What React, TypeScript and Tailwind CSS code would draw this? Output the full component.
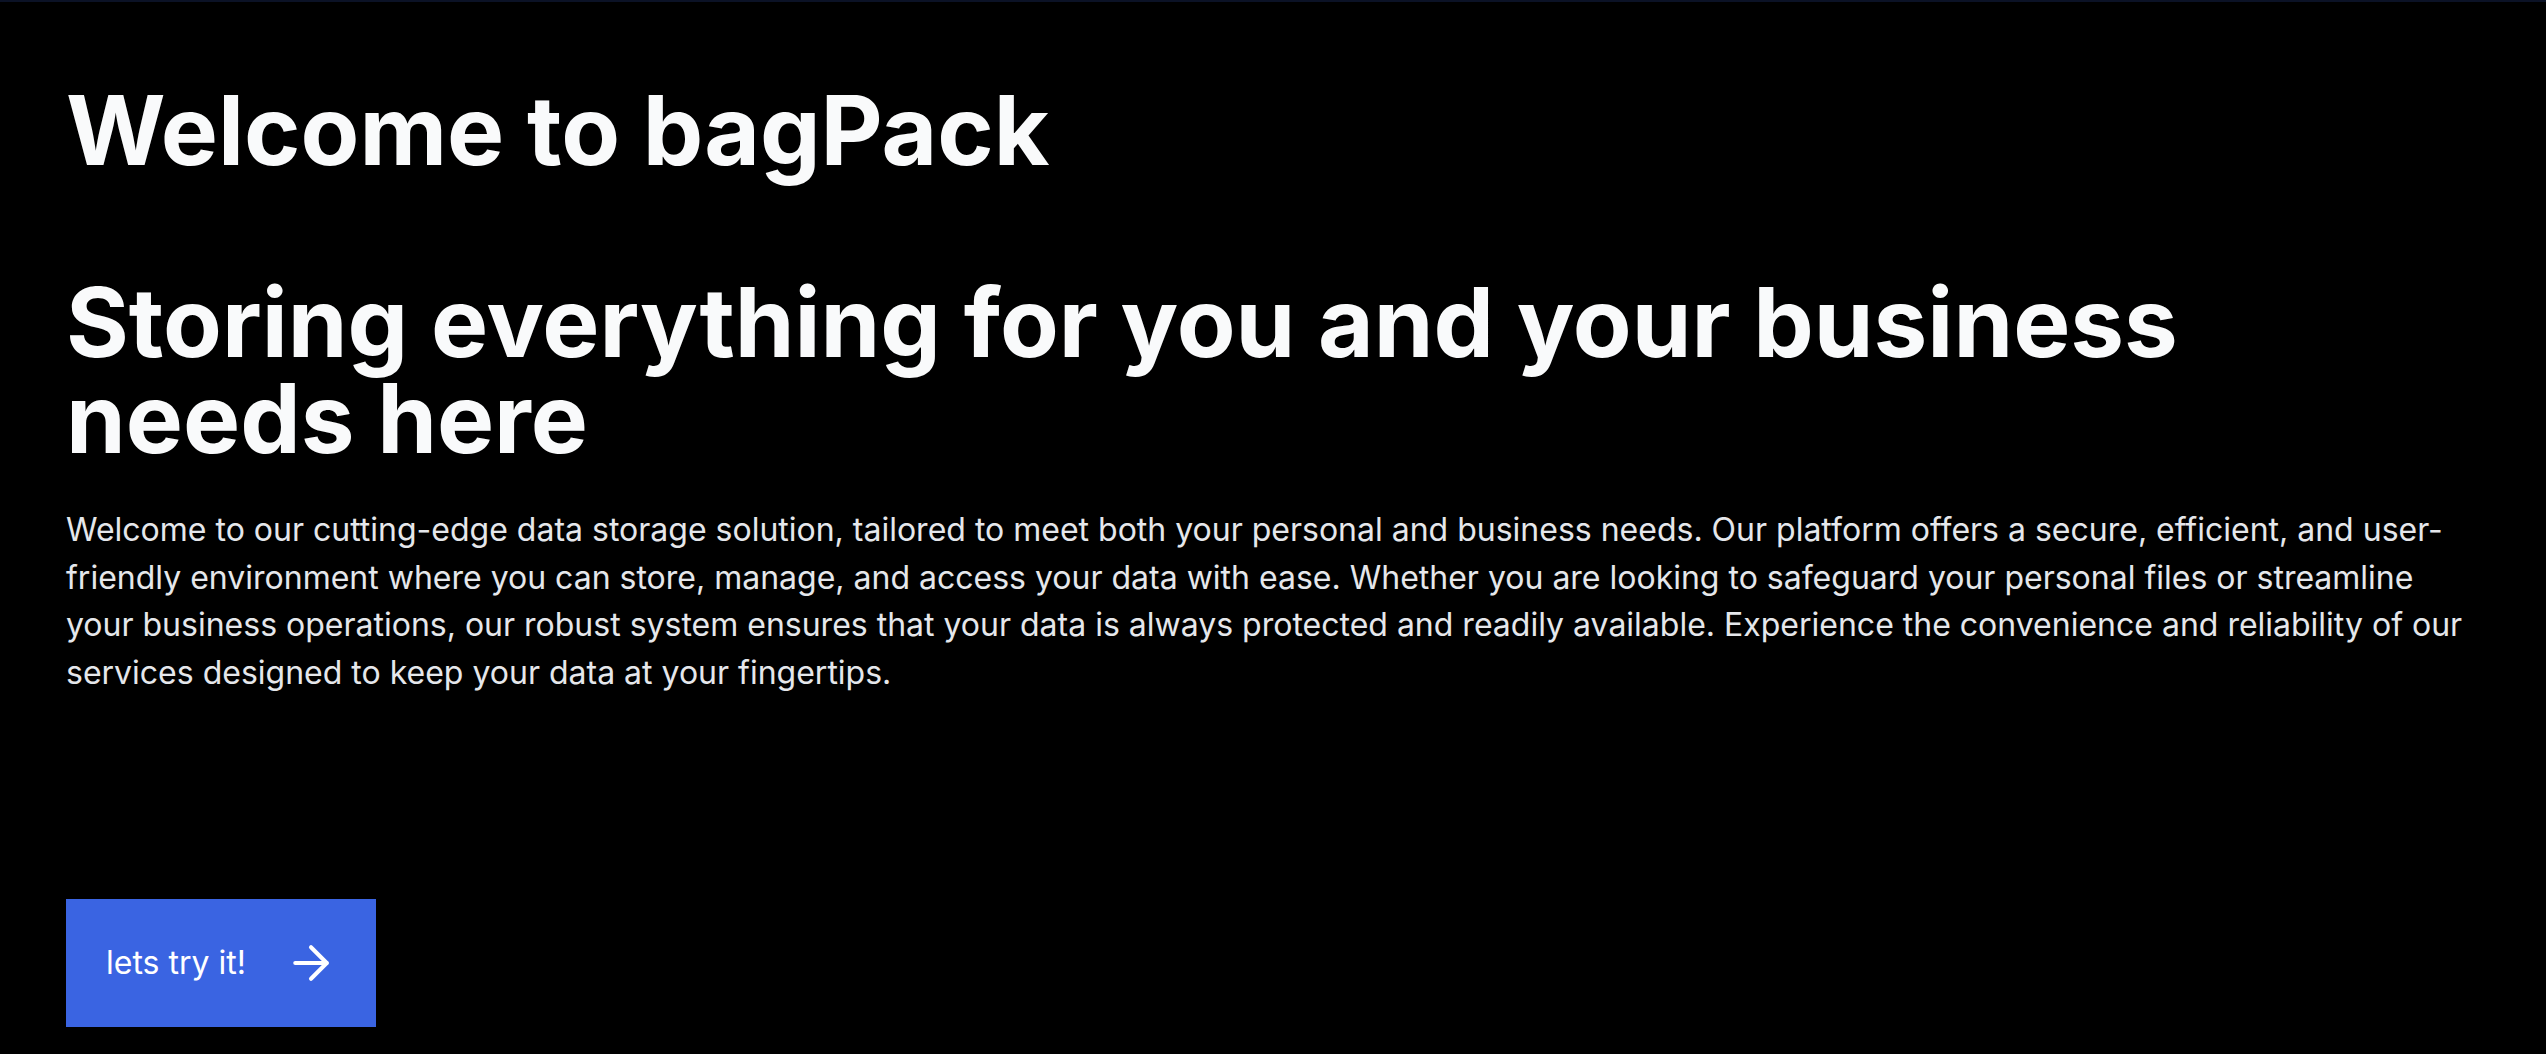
import { ArrowRight } from 'lucide-react';

const INTRO =
  'Welcome to our cutting-edge data storage solution, tailored to meet both your personal and business needs. Our platform offers a secure, efficient, and user-friendly environment where you can store, manage, and access your data with ease. Whether you are looking to safeguard your personal files or streamline your business operations, our robust system ensures that your data is always protected and readily available. Experience the convenience and reliability of our services designed to keep your data at your fingertips.';

export default function App() {
  return (
    <div className="min-h-screen bg-black border-t-2 border-[#0b1226] font-['Inter',sans-serif]">
      <main className="px-[66px] pt-[80px] pb-10">
        <h1 className="text-8xl font-bold leading-none text-gray-50">Welcome to bagPack</h1>
        <h2 className="mt-24 text-8xl font-bold leading-none text-gray-50">
          Storing everything for you and your business needs here
        </h2>
        <p className="mt-10 text-[32px] leading-[47.5px] text-gray-200">{INTRO}</p>
        <button className="mt-[203px] flex h-[128px] w-[310px] items-center gap-[38px] bg-[#3a64e2] pl-10 text-[32px] text-white">
          <span>lets try it!</span>
          <ArrowRight size={54} strokeWidth={1.8} />
        </button>
      </main>
    </div>
  );
}
